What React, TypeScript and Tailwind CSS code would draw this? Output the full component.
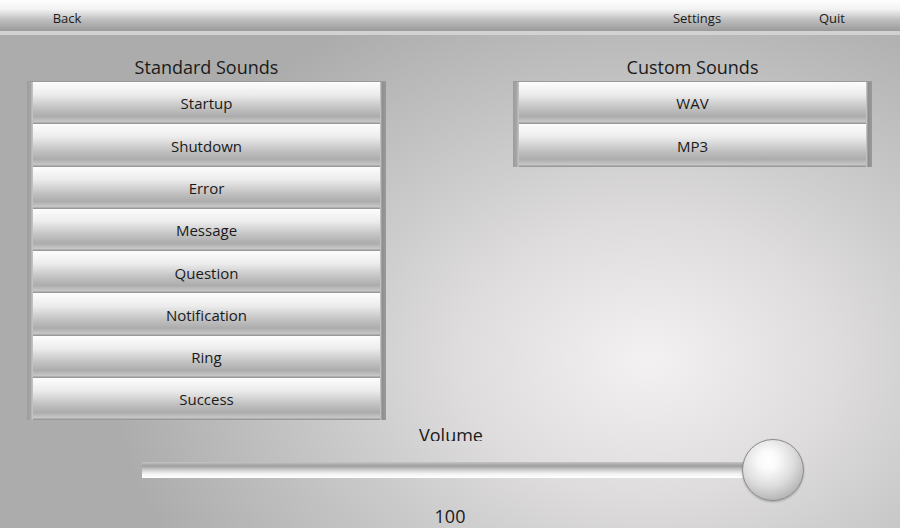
import React from 'react'

const standard = ['Startup', 'Shutdown', 'Error', 'Message', 'Question', 'Notification', 'Ring', 'Success']
const custom = ['WAV', 'MP3']

function MetalButton({ label }: { label: string }) {
  return (
    <div className="flex h-[42.3px] bg-[linear-gradient(to_bottom,#fdfdfd_0%,#ececec_30%,#c2c2c2_62%,#acacac_82%,#c6c6c6_94%,#8e8e8e_100%)]">
      <div className="w-[6px] bg-[linear-gradient(to_right,#9c9c9c_0%,#a6a6a6_60%,#c8c8c8_100%)]" />
      <div className="flex-1 flex items-center justify-center pt-[1px] text-[15px] text-[#1a1a1a]">{label}</div>
      <div className="w-[6px] bg-[linear-gradient(to_right,#d0d0d0_0%,#8e8e8e_35%,#9a9a9a_100%)]" />
    </div>
  )
}

function Panel({ title, items }: { title: string; items: string[] }) {
  return (
    <div className="w-[359px] flex flex-col">
      <div className="h-[25px] text-center text-[18px] leading-[22px] text-[#1a1a1a]">{title}</div>
      <div className="flex flex-col border-t border-[#9a9a9a]">
        {items.map((item) => (
          <MetalButton key={item} label={item} />
        ))}
      </div>
    </div>
  )
}

export default function App() {
  return (
    <div
      className="w-[900px] h-[528px] overflow-hidden flex flex-col bg-[radial-gradient(ellipse_60%_75%_at_72%_68%,#f3f1f1_0%,#dedcdc_35%,#c2c2c2_70%,#acacac_100%)]"
      style={{ fontFamily: '"Open Sans", "Noto Sans", sans-serif' }}
    >
      <div className="h-[32px] flex items-center text-[13px] text-[#1a1a1a] bg-[linear-gradient(to_bottom,#ffffff_0%,#f2f2f2_30%,#bdbdbd_65%,#9a9a9a_100%)]">
        <div className="w-[134px] text-center pt-[7px]">Back</div>
        <div className="flex-1" />
        <div className="w-[100px] text-center pt-[7px]">Settings</div>
        <div className="w-[55px]" />
        <div className="w-[60px] text-center pt-[7px]">Quit</div>
        <div className="w-[38px]" />
      </div>
      <div className="h-[4px] bg-[#d2d2d2]" />
      <div className="h-[21px]" />
      <div className="flex pl-[27px] gap-[127px]">
        <Panel title="Standard Sounds" items={standard} />
        <Panel title="Custom Sounds" items={custom} />
      </div>
      <div className="h-[15px] mt-[6px] overflow-hidden flex justify-center">
        <div className="text-[18px] leading-[24px] -mt-[3px] text-[#1a1a1a] pl-[2px]">Volume</div>
      </div>
      <div className="relative h-[62px] mt-[-2px]">
        <div className="absolute left-[142px] top-[23px] w-[620px] h-[16px] bg-[linear-gradient(to_bottom,#c4c4c4_0%,#9e9e9e_25%,#cfcfcf_50%,#f4f4f4_75%,#ffffff_100%)]" />
        <div className="absolute left-[742px] top-0 w-[62px] h-[62px] rounded-full border border-[#8a8a8a] bg-[radial-gradient(circle_at_42%_34%,#ffffff_0%,#fafafa_18%,#dcdcdc_50%,#b0b0b0_80%,#a4a4a4_90%,#c4c4c4_100%)] shadow-[0_1px_2px_rgba(0,0,0,0.25)]" />
      </div>
      <div className="text-center text-[18px] leading-[24px] mt-[4px] text-[#1a1a1a]">100</div>
    </div>
  )
}
